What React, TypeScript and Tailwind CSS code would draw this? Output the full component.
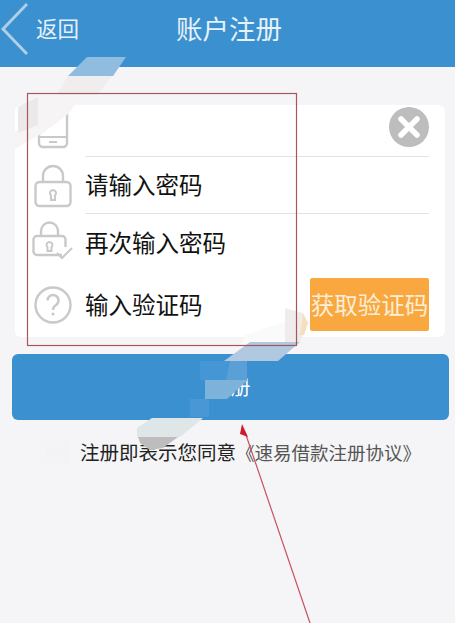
const cjk = "font-['Noto_Sans_CJK_SC','Liberation_Sans',sans-serif]";

function PhoneIcon() {
  return (
    <svg width="40" height="50" viewBox="0 0 40 50" fill="none" stroke="#c9c9c9" strokeWidth="2.400">
      <rect x="6" y="2" width="28" height="46" rx="4" />
      <path d="M6 38h28M6 9h28" strokeWidth="1.800" />
      <path d="M16 43h8" strokeWidth="2" />
    </svg>
  );
}

function LockIcon() {
  return (
    <svg width="40" height="44" viewBox="0 0 40 44" fill="none" stroke="#c9c9c9" strokeWidth="2.400">
      <path d="M10 18v-6a10 10 0 0 1 20 0v6" />
      <rect x="2.500" y="18" width="35" height="24" rx="4" />
      <path d="M20 26a3.200 3.200 0 0 0-2 5.600V36h4v-4.400a3.200 3.200 0 0 0-2-5.600z" strokeWidth="2" />
    </svg>
  );
}

function LockCheckIcon() {
  return (
    <svg width="42" height="40" viewBox="0 0 42 40" fill="none" stroke="#c9c9c9" strokeWidth="2.400">
      <path d="M9 15v-5a8.500 8.500 0 0 1 17 0v5" />
      <path d="M30 34H5a3.500 3.500 0 0 1-3.500-3.500V18.500A3.500 3.500 0 0 1 5 15h25a3.500 3.500 0 0 1 3.500 3.500V26" />
      <path d="M17.500 21a3 3 0 0 0-2 5.200V30h4v-3.800a3 3 0 0 0-2-5.200z" strokeWidth="2" />
      <path d="M25 32l5 5 10-10" strokeWidth="2" />
    </svg>
  );
}

function HelpIcon() {
  return (
    <svg width="38" height="38" viewBox="0 0 38 38" fill="none" stroke="#c9c9c9" strokeWidth="2.400">
      <circle cx="19" cy="19" r="17.500" />
      <path d="M13.500 14.500a5.500 5.500 0 1 1 8.500 4.600c-2 1.300-3 2.300-3 4.900" strokeWidth="2.400" />
      <circle cx="19" cy="28" r="1.600" fill="#c9c9c9" stroke="none" />
    </svg>
  );
}

function ClearIcon() {
  return (
    <svg width="40" height="40" viewBox="0 0 40 40">
      <circle cx="20" cy="20" r="20" fill="#bdbdbd" />
      <path d="M12 12l16 16M28 12L12 28" stroke="#fff" strokeWidth="5.500" strokeLinecap="round" />
    </svg>
  );
}

// smudged-out parts and the red markup drawn over the screenshot
function Markup() {
  return (
    <svg className="absolute inset-0 pointer-events-none" width="455" height="623" viewBox="0 0 455 623">
      <polygon points="87,57 126,57 113,76 68,76" fill="#90bce0" />
      <polygon points="68,76 112,76 97,95 57,95" fill="#efeded" />
      <polygon points="38,95 83,95 67,115 43,133 13,150 0,146 18,130 18,107" fill="#f6f4f5" />
      <polygon points="18,107 38,97 38,125 18,133" fill="#ebe9e9" />
      <polygon points="285,308 303,313 308,323 300,342 285,342" fill="#f1ecec" />
      <polygon points="303,313 308,323 304,335 300,335" fill="#f6dfbf" />
      <polygon points="285,322 285,342 250,342 240,350 245,335" fill="#fafafa" />
      <polygon points="250,342 300,342 278,361 224,361" fill="#b0c8e0" />
      <polygon points="200,361 247,361 247,380 200,380" fill="#4596d4" />
      <polygon points="230,361 247,361 247,380 226,380" fill="#5aa0d6" />
      <polygon points="205,380 248,380 227,399 205,399" fill="#7db3da" />
      <polygon points="190,399 209,399 209,417 190,417" fill="#4a97d6" />
      <polygon points="152,418 203,418 180,437 137,437 137,428" fill="#dfe6e8" />
      <polygon points="138,437 178,437 163,448 150,450 140,443" fill="#bdbdbd" />
      <rect x="27.500" y="93.500" width="269" height="252" fill="none" stroke="#a5575c" strokeWidth="1.200" />
      <path d="M310 623L245 432" stroke="#c4535c" strokeWidth="1.200" />
      <polygon points="242,424 248,437 240,434" fill="#cf1b2b" />
    </svg>
  );
}

export default function App() {
  const rowText = "text-[23.5px] leading-none text-[#111]";
  return (
    <div className={`relative w-[455px] h-[623px] overflow-hidden bg-[#f5f5f7] ${cjk}`}>
      <header className="grid grid-cols-[1fr_auto_1fr] items-center h-[67px] pb-[11px] bg-[#3b90d0]">
        <div className="flex items-center gap-[8px] pl-[1px]">
          <svg width="27" height="54" viewBox="0 0 27 54" fill="none" stroke="#afcfe8" strokeWidth="3">
            <path d="M26 3L2 28l24 25" />
          </svg>
          <span className="text-[21.5px] leading-none text-[#e6f1f9]">返回</span>
        </div>
        <h1 className="ml-[3px] text-[26.5px] leading-none font-normal text-[#e6f1f9]">账户注册</h1>
        <div />
      </header>

      <main className="pt-[38px]">
        <section className="ml-[15px] w-[430px] h-[232px] rounded-[6px] bg-white pr-[16px]">
          <div className="flex h-[52px]">
            <div className="w-[70px] flex justify-center items-end pb-[8px] pl-[5px] overflow-hidden">
              <PhoneIcon />
            </div>
            <div className="flex-1 flex items-center justify-end border-b border-[#e6e2e4]">
              <span className="mb-[8px]"><ClearIcon /></span>
            </div>
          </div>
          <div className="flex h-[57px]">
            <div className="w-[70px] flex justify-center items-center pl-[5px]">
              <LockIcon />
            </div>
            <div className={`flex-1 flex items-center border-b border-[#e6e2e4] ${rowText}`}>请输入密码</div>
          </div>
          <div className="flex h-[58px]">
            <div className="w-[70px] flex justify-center items-center pl-[5px] pb-[4px]">
              <LockCheckIcon />
            </div>
            <div className={`flex-1 flex items-center ${rowText}`}>再次输入密码</div>
          </div>
          <div className="flex h-[65px]">
            <div className="w-[70px] flex justify-center items-center pl-[5px]">
              <HelpIcon />
            </div>
            <div className={`flex-1 flex items-center justify-between ${rowText}`}>
              <span>输入验证码</span>
              <button className={`flex items-center justify-center w-[119px] h-[53px] rounded-[2px] bg-[#f9a83f] text-[23.5px] leading-none text-[#fbeed9] ${cjk}`}>
                获取验证码
              </button>
            </div>
          </div>
        </section>

        <button className="block mt-[17px] ml-[12px] w-[437px] h-[66px] rounded-[6px] bg-[#3b90d0] text-[20px] text-white">
          注册
        </button>

        <div className="flex items-center mt-[21px] ml-[47px]">
          <span className="w-[23px] h-[22px] rounded-[2px] bg-[#f3f3f5]" />
          <p className="ml-[10px] whitespace-nowrap text-[19.5px] leading-none text-[#222]">
            注册即表示您同意<span className="text-[18.5px] text-[#555]">《速易借款注册协议》</span>
          </p>
        </div>
      </main>

      <Markup />
    </div>
  );
}
